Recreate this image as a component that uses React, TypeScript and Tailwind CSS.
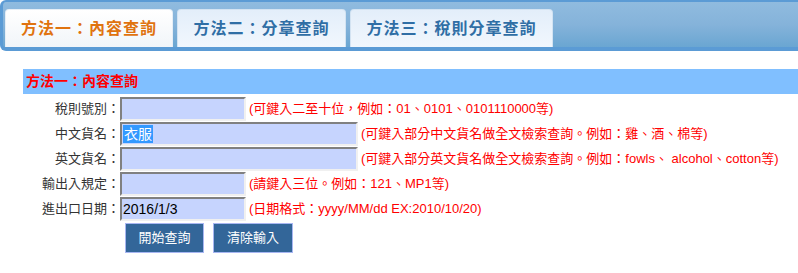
import React from "react";

const FONT = { fontFamily: '"Liberation Sans", "Noto Sans CJK TC", sans-serif' };

function Field({ w, children }: { w: number; children?: React.ReactNode }) {
  return (
    <div
      className="h-[24px] border-2 border-t-[#808080] border-l-[#808080] border-r-[#f0f0f0] border-b-[#f0f0f0] bg-[#c6d4fe] flex items-center pl-[1px] text-[13px] text-black leading-none"
      style={{ width: w }}
    >
      {children}
    </div>
  );
}

function Row({ label, w, hint, children }: { label: string; w: number; hint: string; children?: React.ReactNode }) {
  return (
    <div className="flex items-center h-[25px]">
      <div className="w-[97px] text-right text-[13px] text-[#333] whitespace-nowrap">{label}</div>
      <Field w={w}>{children}</Field>
      <div className="ml-[3px] text-[13px] text-[#ff0000] whitespace-nowrap">{hint}</div>
    </div>
  );
}

export default function App() {
  return (
    <div className="w-[798px] h-[273px] bg-white overflow-hidden" style={FONT}>
      <div className="h-[51px] border-t-2 border-l-[3px] border-b-[4px] border-[#5b9bd5] rounded-l-[6px] bg-linear-to-b from-[#90bbdf] via-[#85b3da] to-[#6aa6d2] pl-[2px] pt-[7px] flex gap-[4px]">
        <div className="h-[38px] w-[168px] rounded-t-[4px] border border-b-0 border-[#e6eef6] bg-linear-to-b from-white to-[#f1f5f9] flex items-center justify-center text-[16px] font-bold tracking-[1px] text-[#e0730f]">
          方法一：內容查詢
        </div>
        <div className="h-[38px] w-[169px] rounded-t-[4px] border border-b-0 border-[#d3e3f2] bg-linear-to-b from-[#e3eefa] to-[#f1f7fd] flex items-center justify-center text-[16px] font-bold tracking-[1px] text-[#2f6ea5]">
          方法二：分章查詢
        </div>
        <div className="h-[38px] w-[203px] rounded-t-[4px] border border-b-0 border-[#d3e3f2] bg-linear-to-b from-[#e3eefa] to-[#f1f7fd] flex items-center justify-center text-[16px] font-bold tracking-[1px] text-[#2f6ea5]">
          方法三：稅則分章查詢
        </div>
      </div>

      <div className="ml-[23px] mt-[18px]">
        <div className="h-[25px] bg-[#80bfff] flex items-center pl-[3px] text-[14px] font-bold text-[#ff0000]">
          方法一：內容查詢
        </div>
        <div className="mt-[2px]">
          <Row label="稅則號別：" w={126} hint="(可鍵入二至十位，例如：01、0101、0101110000等)" />
          <Row label="中文貨名：" w={238} hint="(可鍵入部分中文貨名做全文檢索查詢。例如：雞、酒、棉等)">
            <span className="bg-[#3399ff] text-white text-[14px] px-[1px] py-[2px]">衣服</span>
          </Row>
          <Row label="英文貨名：" w={238} hint="(可鍵入部分英文貨名做全文檢索查詢。例如：fowls、 alcohol、cotton等)" />
          <Row label="輸出入規定：" w={126} hint="(請鍵入三位。例如：121、MP1等)" />
          <Row label="進出口日期：" w={126} hint="(日期格式：yyyy/MM/dd EX:2010/10/20)">
            <span className="text-[14px]">2016/1/3</span>
          </Row>
        </div>
        <div className="flex gap-[9px] ml-[102px] mt-[2px]">
          <button className="w-[79px] h-[30px] bg-[#336699] border border-[#a8b6f2] text-white text-[13px]">開始查詢</button>
          <button className="w-[80px] h-[30px] bg-[#336699] border border-[#a8b6f2] text-white text-[13px]">清除輸入</button>
        </div>
      </div>
    </div>
  );
}
